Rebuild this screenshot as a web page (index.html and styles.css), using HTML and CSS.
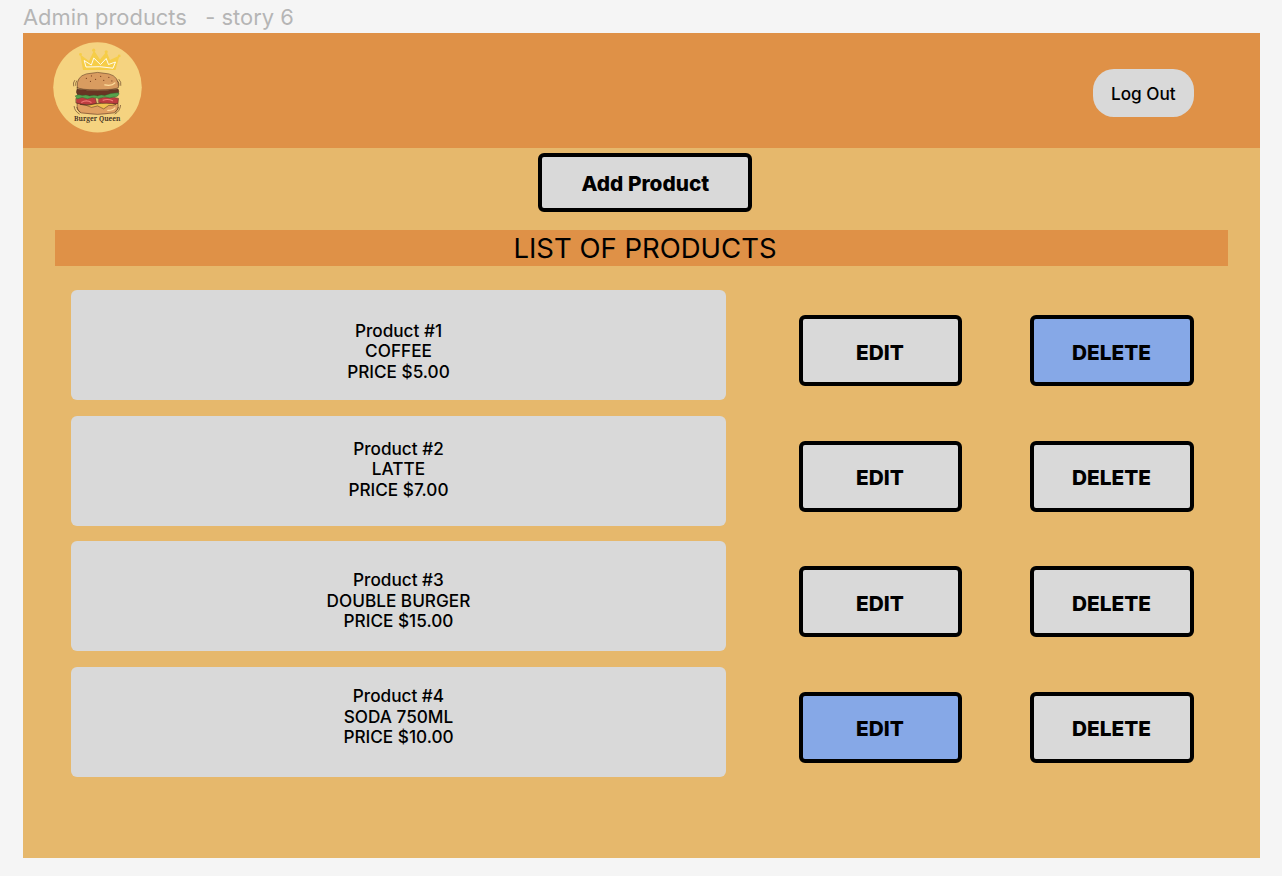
FILE: index.html
```html
<!DOCTYPE html>
<html lang="en">
<head>
<meta charset="utf-8">
<title>Admin products</title>
<link rel="stylesheet" href="styles.css">
</head>
<body>
<div class="frame-label">Admin products &nbsp; - story 6</div>
<main class="frame">
  <header class="header">
    <svg class="logo" viewBox="0 0 89 91" role="img" aria-label="Burger Queen">
      <ellipse cx="44.5" cy="45.3" rx="44.3" ry="45.1" fill="#f5d380"/>
      <g fill="#f6cd48">
        <path d="M30 28 27.2 12.5 36 19 41 8.5 47 17.5 53.5 9.5 57 18 66.5 13.5 62.5 28Z"/>
        <circle cx="27.5" cy="12.4" r="1.4"/><circle cx="40.7" cy="8.2" r="1.6"/><circle cx="53.2" cy="9.8" r="1.6"/><circle cx="66.2" cy="13.9" r="1.4"/>
      </g>
      <path d="M33 25 31.2 18.5 38.3 23 40.8 16 47.5 22.6 53.2 16.5 55.5 22.5 62.5 20 60 26.2Q47 23.8 33 25Z" fill="none" stroke="#fff" stroke-width=".9" stroke-linejoin="round"/>
      <g transform="translate(-1.3 .4) scale(1.02 1)">
      <g stroke="#4a2b1c" stroke-width=".5" stroke-linejoin="round" stroke-linecap="round">
        <path d="M25 61H65Q66 68 61 70.5Q45 73.5 29 70.5Q24 68 25 61Z" fill="#e0a061"/>
        <path d="M25 45Q24 34 34 31.5Q45 28.5 56 31.5Q66 34 65.5 45Q63 47.5 45 47.5Q27 47.5 25 45Z" fill="#d99c60"/>
        <path d="M25 46.5Q45 49.5 65 46.5Q67 49 64 53Q45 55 26 53Q23 50 25 46.5Z" fill="#683523"/>
        <path d="M24 56Q34 52 43 56L44 61Q34 64 24 60.5ZM46 56Q56 53 65.5 56L65 61Q54 63 46 60Z" fill="#bd3c3f"/>
        <path d="M28 62Q36 64 43 61.5Q55 60 63 62Q60 64 56 63L51 66.5 45 63.5 39 65 34 63Z" fill="#f0c050"/>
      </g>
      <path d="M23 53.5Q26 51.5 30 53Q34 52 37 53.5Q42 52 45 53.5Q48 52 52 53Q59 50 66 50.5Q66 54.5 61 54.5L57 55.5 52 54.5 46 56 40 55 35 56.5 30 55 25 56.5Z" fill="#56a34c" stroke="#315c2c" stroke-width=".4"/>
      <path d="M29 60Q34 57 39 60M50 58Q55 56 60 58.5" fill="none" stroke="#f07a76" stroke-width="1.2"/>
      <path d="M52 42.5Q59 44 62 40.5M55 68Q60 68 62 65.5" fill="none" stroke="#ffe0a0" stroke-width="1.2" stroke-linecap="round"/>
      <g fill="#814927"><circle cx="34" cy="36" r=".6"/><circle cx="39" cy="33.5" r=".6"/><circle cx="43" cy="37" r=".6"/><circle cx="48" cy="34" r=".6"/><circle cx="51" cy="38" r=".6"/><circle cx="56" cy="35" r=".6"/><circle cx="38" cy="39" r=".6"/><circle cx="59" cy="38.5" r=".6"/></g>
      <path d="M22.5 38Q20.5 40.5 21.5 43.5M24.5 38.5Q23 40.5 23.5 43M66 37Q68.5 39.5 67.8 43M64.5 38.5Q66.5 40.5 66 43M22 64Q22.5 69 27 71.5M24.5 65Q25 68 28 70M67.5 63Q67 69 62 71.5M65.5 65Q65 68 62.5 69.5" fill="none" stroke="#57331d" stroke-width=".6" stroke-linecap="round"/>
      </g>
      <text class="logo-text" x="44.3" y="79.2" text-anchor="middle" textLength="46.5" lengthAdjust="spacingAndGlyphs">Burger Queen</text>
    </svg>
    <button class="logout">Log Out</button>
  </header>
  <section class="content">
    <button class="button add">Add Product</button>
    <h1 class="title">LIST OF PRODUCTS</h1>
    <div class="products">
      <article class="row"><p class="card card-coffee">Product #1<br>COFFEE<br>PRICE $5.00</p><button class="button">EDIT</button><button class="button active">DELETE</button></article>
      <article class="row"><p class="card card-latte">Product #2<br>LATTE<br>PRICE $7.00</p><button class="button">EDIT</button><button class="button">DELETE</button></article>
      <article class="row"><p class="card card-burger">Product #3<br>DOUBLE BURGER<br>PRICE $15.00</p><button class="button">EDIT</button><button class="button">DELETE</button></article>
      <article class="row"><p class="card card-soda">Product #4<br>SODA 750ML<br>PRICE $10.00</p><button class="button active">EDIT</button><button class="button">DELETE</button></article>
    </div>
  </section>
</main>
</body>
</html>
```
FILE: styles.css
```css
* { box-sizing: border-box; }
body {
  margin: 0;
  height: 876px;
  overflow: hidden;
  background: #f5f5f5;
  color: #000;
  font-family: Inter, sans-serif;
}
button { font-family: inherit; color: #000; padding: 0; }
.frame-label {
  height: 33.4px;
  padding: 4px 0 0 23px;
  font-size: 21.9px;
  font-weight: 430;
  line-height: 27px;
  color: #b5b5b5;
  white-space: pre;
}
.frame {
  width: 1237.9px;
  height: 824.6px;
  margin-left: 22.6px;
  background: #e6b86c;
}
.header {
  display: flex;
  justify-content: space-between;
  height: 115px;
  padding: 8.6px 66.9px 0 30.4px;
  background: #df9147;
}
.logo { width: 89px; height: 91px; }
.logo-text { font: 600 7.2px "Noto Serif", "Liberation Serif", serif; fill: #3b2b1c; }
.logout {
  width: 100.5px;
  height: 47.5px;
  margin-top: 27.4px;
  border: 0;
  border-radius: 21px;
  background: #d9d9d9;
  font-size: 17.2px;
  font-weight: 450;
}
.content { display: flex; flex-direction: column; padding-top: 4.2px; }
.button {
  width: 163.5px;
  height: 71px;
  padding-top: 2px;
  border: 4px solid #000;
  border-radius: 6px;
  background: #d9d9d9;
  font-size: 20.8px;
  font-weight: 780;
}
.active { background: #86a8e7; }
.add { width: 214px; height: 59.5px; margin-left: 515.8px; }
.title {
  width: 1173px;
  height: 36px;
  margin: 18px 0 0 32.4px;
  padding-left: 7px;
  background: #df9147;
  font-size: 27.5px;
  font-weight: 400;
  line-height: 37.8px;
  text-align: center;
}
.products {
  display: flex;
  flex-direction: column;
  gap: 15.5px;
  margin: 24.2px 0 0 48.4px;
}
.row {
  display: grid;
  grid-template-columns: 655px 163.5px 163.5px;
  column-gap: 73px;
  height: 110px;
}
.row .button { margin-top: 25.2px; padding: 2.8px 1.5px 0 0; }
.row .button:last-child { margin-left: -5px; }
.card {
  margin: 0;
  border-radius: 6px;
  background: #d9d9d9;
  font-size: 17.2px;
  font-weight: 450;
  line-height: 20.7px;
  text-align: center;
}
.card-coffee { padding-top: 30.4px; }
.card-latte { padding-top: 22.8px; }
.card-burger { padding-top: 28.8px; }
.card-soda { padding-top: 19.2px; }
```
